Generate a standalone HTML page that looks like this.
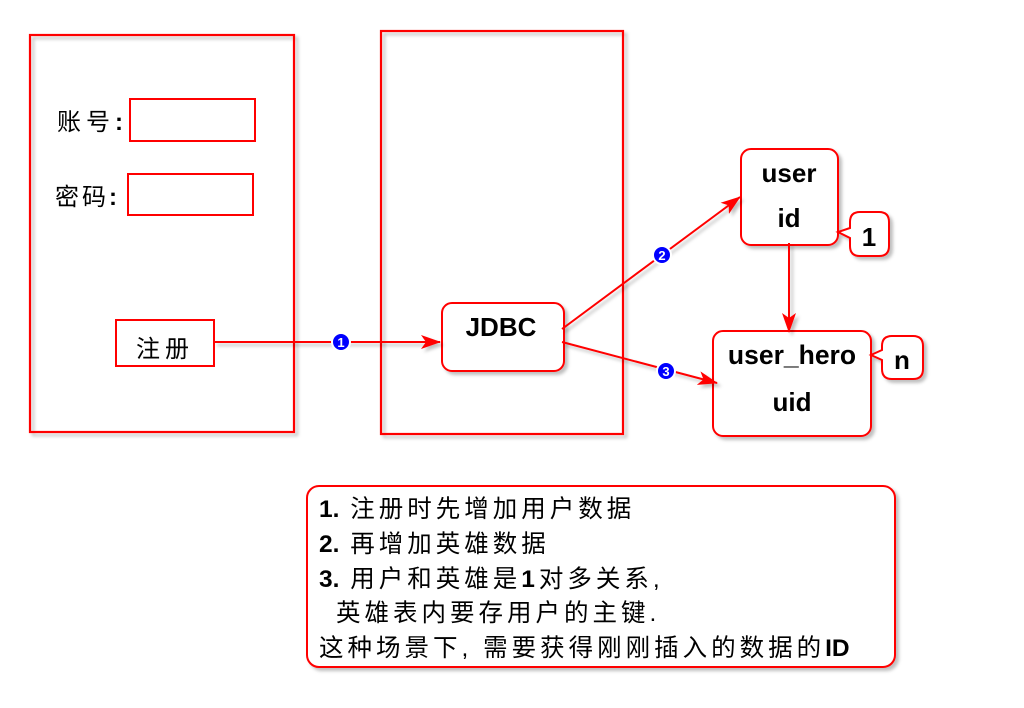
<!DOCTYPE html>
<html><head><meta charset="utf-8">
<style>
html,body{margin:0;padding:0;background:#fff;}
svg{display:block;}
text{font-family:"Liberation Sans","Noto Sans CJK SC",sans-serif;fill:#000;}
.b{font-weight:bold;}
</style></head>
<body>
<svg width="1024" height="708" viewBox="0 0 1024 708" xmlns="http://www.w3.org/2000/svg">
<defs>
<filter id="sh" x="-5%" y="-5%" width="115%" height="115%">
<feDropShadow dx="3" dy="3" stdDeviation="1.5" flood-color="#000" flood-opacity="0.25"/>
</filter>
<marker id="ar" markerWidth="20" markerHeight="14" refX="19" refY="7" orient="auto" markerUnits="userSpaceOnUse">
<path d="M0,0 L20,7 L0,14 L5,7 Z" fill="#f00"/>
</marker>
</defs>
<g fill="none" stroke="#f00" stroke-width="2.2" filter="url(#sh)">
<rect x="30" y="35" width="264" height="397"/>
<rect x="381" y="31" width="242" height="403"/>
</g>
<g fill="none" stroke="#f00" stroke-width="2">
<rect x="130" y="99" width="125" height="42"/>
<rect x="128" y="174" width="125" height="41"/>
<rect x="116" y="320" width="98" height="46"/>
</g>
<g fill="#fff" stroke="#f00" stroke-width="2" filter="url(#sh)">
<rect x="442" y="303" width="122" height="68" rx="10"/>
<rect x="741" y="149" width="97" height="96" rx="10"/>
<rect x="713" y="331" width="158" height="105" rx="10"/>
<rect x="307" y="486" width="588" height="181" rx="12"/>
<path d="M860,212 H879 Q889,212 889,222 V246 Q889,256 879,256 H860 Q850,256 850,246 V238 L838,232 L850,228 V222 Q850,212 860,212 Z"/>
<path d="M892,336 H913 Q923,336 923,346 V369 Q923,379 913,379 H892 Q882,379 882,369 V360 L871,355 L882,350 V346 Q882,336 892,336 Z"/>
</g>
<g stroke="#f00" stroke-width="2" fill="none" filter="url(#sh)">
<line x1="214" y1="342" x2="440" y2="342" marker-end="url(#ar)"/>
<line x1="562" y1="329" x2="740" y2="197" marker-end="url(#ar)"/>
<line x1="562" y1="342" x2="717" y2="383" marker-end="url(#ar)"/>
<line x1="789" y1="243" x2="789" y2="332" marker-end="url(#ar)"/>
</g>
<g>
<circle cx="341" cy="342" r="9" fill="#00f" stroke="#fff" stroke-width="2"/>
<text x="341" y="347" font-size="13" text-anchor="middle" style="fill:#fff" class="b">1</text>
<circle cx="662" cy="255" r="9" fill="#00f" stroke="#fff" stroke-width="2"/>
<text x="662" y="260" font-size="13" text-anchor="middle" style="fill:#fff" class="b">2</text>
<circle cx="666" cy="371" r="9" fill="#00f" stroke="#fff" stroke-width="2"/>
<text x="666" y="376" font-size="13" text-anchor="middle" style="fill:#fff" class="b">3</text>
</g>
<text x="57" y="130" font-size="24" letter-spacing="5">账号<tspan class="b">:</tspan></text>
<text x="55" y="205" font-size="24" letter-spacing="3">密码<tspan class="b">:</tspan></text>
<text x="136" y="357" font-size="24" letter-spacing="5">注册</text>
<text x="501" y="336" font-size="26" class="b" text-anchor="middle">JDBC</text>
<text x="789" y="182" font-size="26" class="b" text-anchor="middle">user</text>
<text x="789" y="227" font-size="26" class="b" text-anchor="middle">id</text>
<text x="792" y="364" font-size="26.5" class="b" text-anchor="middle">user_hero</text>
<text x="792" y="411" font-size="26" class="b" text-anchor="middle">uid</text>
<text x="869" y="246" font-size="26" class="b" text-anchor="middle">1</text>
<text x="902" y="369" font-size="26" class="b" text-anchor="middle">n</text>
<g font-size="24.5" letter-spacing="4">
<text x="319" y="517"><tspan class="b" letter-spacing="0">1.</tspan> 注册时先增加用户数据</text>
<text x="319" y="552"><tspan class="b" letter-spacing="0">2.</tspan> 再增加英雄数据</text>
<text x="319" y="587"><tspan class="b" letter-spacing="0">3.</tspan> 用户和英雄是<tspan class="b">1</tspan>对多关系,</text>
<text x="336" y="621">英雄表内要存用户的主键.</text>
<text x="319" y="656">这种场景下, 需要获得刚刚插入的数据的<tspan class="b" letter-spacing="0">ID</tspan></text>
</g>
</svg>
</body></html>
